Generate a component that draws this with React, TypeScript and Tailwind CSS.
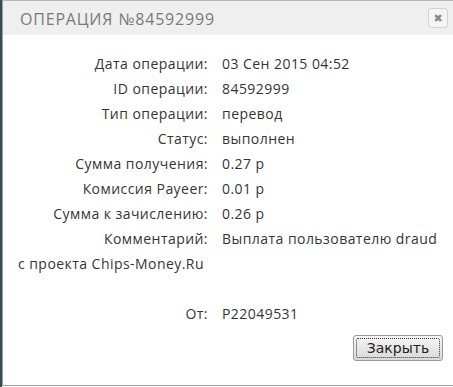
import React from "react";

const rows: [string, string][] = [
  ["Дата операции:", "03 Сен 2015 04:52"],
  ["ID операции:", "84592999"],
  ["Тип операции:", "перевод"],
  ["Статус:", "выполнен"],
  ["Сумма получения:", "0.27 р"],
  ["Комиссия Payeer:", "0.01 р"],
  ["Сумма к зачислению:", "0.26 р"],
  ["Комментарий:", "Выплата пользователю draud"],
];

export default function App() {
  return (
    <div className="w-[453px] h-[387px] flex bg-white overflow-hidden" style={{ fontFamily: '"Open Sans", sans-serif' }}>
      <div className="w-[2px] bg-[#3a4a52] shrink-0" />
      <div className="flex-1 flex flex-col border-l border-t border-b border-l-[#9aa0a3] border-t-[#b5b5b5] border-b-[#a0a0a0] mb-[1px]">
        <div className="h-[34px] bg-[#efefef] flex items-center justify-between pl-[17px] pr-[5px] shrink-0">
          <span className="text-[16px] tracking-[0.8px] text-[#7a7a7a] font-medium leading-none pt-[1px]">ОПЕРАЦИЯ №84592999</span>
          <div className="w-[20px] h-[20px] rounded-[3px] border border-[#d2d2d2] bg-[#f4f4f4] flex items-center justify-center text-[#8a8a8a] text-[11px] leading-none" style={{ fontFamily: '"DejaVu Sans", sans-serif' }}>
            ✖
          </div>
        </div>
        <div className="flex-1 flex flex-col pt-[16px] text-[14px] tracking-[0.45px] text-[#353535]">
          {rows.map(([l, v]) => (
            <div key={l} className="grid grid-cols-[205px_1fr] gap-x-[14px] h-[25px] items-center">
              <span className="text-right whitespace-nowrap">{l}</span>
              <span className="whitespace-nowrap">{v}</span>
            </div>
          ))}
          <div className="h-[25px] flex items-center pl-[15px]">с проекта Chips-Money.Ru</div>
          <div className="h-[25px]" />
          <div className="grid grid-cols-[205px_1fr] gap-x-[14px] h-[25px] items-center">
            <span className="text-right">От:</span>
            <span>P22049531</span>
          </div>
          <div className="flex justify-end pr-[10px] pt-[9px] tracking-normal">
            <button className="w-[90px] h-[26px] rounded-[3px] border border-[#9a9a9a] bg-gradient-to-b from-[#f6f6f6] to-[#d9d9d9] p-[2px]">
              <div className="w-full h-full border border-dotted border-[#333] rounded-[2px] flex items-center justify-center text-[14px] text-[#222]" style={{ fontFamily: '"DejaVu Sans", sans-serif' }}>
                Закрыть
              </div>
            </button>
          </div>
        </div>
      </div>
    </div>
  );
}
